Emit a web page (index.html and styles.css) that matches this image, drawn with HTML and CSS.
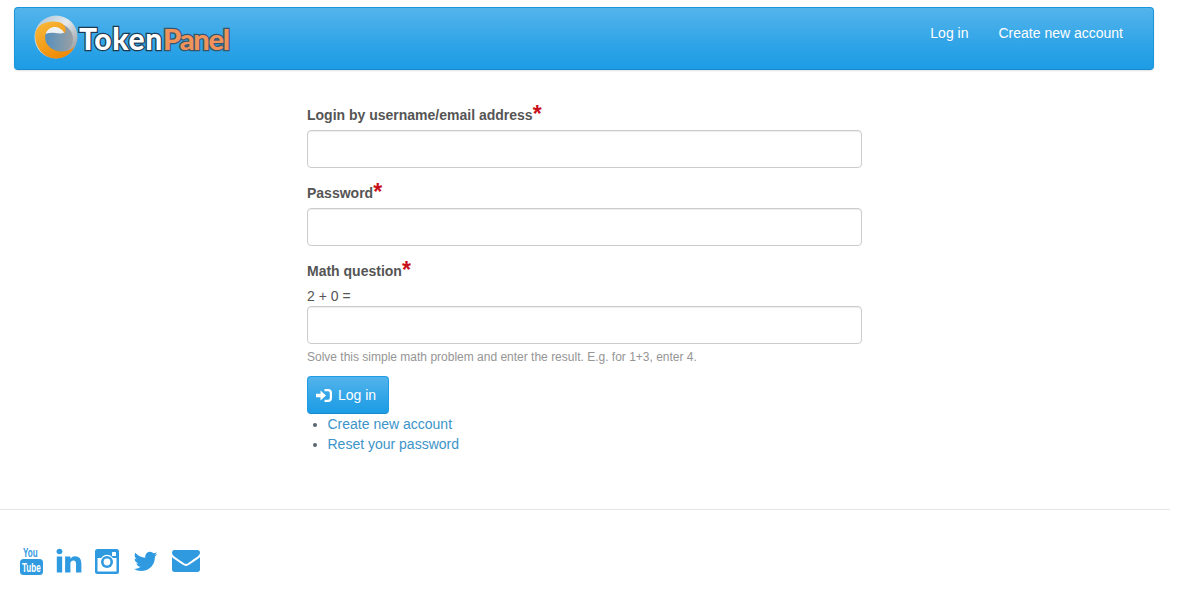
FILE: index.html
```html
<!DOCTYPE html>
<html lang="en">
<head>
<meta charset="utf-8">
<title>TokenPanel</title>
<link rel="stylesheet" href="styles.css">
</head>
<body>
<div class="page">
  <nav class="navbar">
    <a class="brand" href="#">
      <svg class="brand-mark" viewBox="0 0 44 44" width="44" height="44" aria-hidden="true">
        <defs>
          <linearGradient id="ringTop" x1="0" y1="0" x2="1" y2="1">
            <stop offset="0" stop-color="#9fbfd6"/>
            <stop offset=".45" stop-color="#e6eaed"/>
            <stop offset="1" stop-color="#80878c"/>
          </linearGradient>
          <linearGradient id="ringOrange" x1="0" y1="0" x2=".6" y2="1">
            <stop offset="0" stop-color="#f9bb3c"/>
            <stop offset="1" stop-color="#ef8a06"/>
          </linearGradient>
          <linearGradient id="core" x1="0" y1="0" x2="1" y2="0">
            <stop offset="0" stop-color="#4f8fbf"/>
            <stop offset="1" stop-color="#9a9fa3"/>
          </linearGradient>
        </defs>
        <circle cx="22" cy="22" r="21.500" fill="url(#ringTop)"/>
        <circle cx="24" cy="24" r="15" fill="url(#core)"/>
        <path d="M11 19c2-6 7-8.500 11-8 4 .5 7 3 8.500 6.500-3 1.500-6 1-9 .5-4-.5-7 0-10.500 1z" fill="#eef2f4"/>
        <path d="M1.500 17C-.5 30 8 43.500 22 43.500c8 0 15-4.500 18.500-12-5 5-13 6.500-20 3.500-7-3-10.500-9-9-15.500 1.500-5.500 6-8 10.500-7.500 4 .5 7 3 8.500 6.500 2.500-3.500 1-10-6-11.500C15 5 4.500 8 1.500 17z" fill="url(#ringOrange)"/>
      </svg>
      <span class="brand-text">Token<span class="brand-accent">Panel</span></span>
    </a>
    <ul class="nav-links">
      <li><a href="#">Log in</a></li>
      <li><a href="#">Create new account</a></li>
    </ul>
  </nav>

  <main class="login">
    <form>
      <div class="field">
        <label for="name">Login by username/email address<span class="req">*</span></label>
        <input id="name" class="input" type="text">
      </div>
      <div class="field">
        <label for="pass">Password<span class="req">*</span></label>
        <input id="pass" class="input" type="password">
      </div>
      <div class="field-math">
        <label for="math">Math question<span class="req">*</span></label>
        <div class="question">2 + 0 =</div>
        <input id="math" class="input" type="text">
        <p class="help">Solve this simple math problem and enter the result. E.g. for 1+3, enter 4.</p>
      </div>
      <button class="btn" type="button">
        <svg class="btn-icon" viewBox="0 0 16 13" width="16" height="13" aria-hidden="true">
          <path d="M0 4.700h4.500V1.500L10 6.500l-5.500 5V8.300H0z" fill="#fff"/>
          <path d="M8.500 0h3.500Q16 0 16 4v5q0 4-4 4H8.500v-2.200H12q1.800 0 1.800-1.800V4q0-1.800-1.800-1.800H8.500z" fill="#fff"/>
        </svg>Log in
      </button>
      <ul class="links">
        <li><a href="#">Create new account</a></li>
        <li><a href="#">Reset your password</a></li>
      </ul>
    </form>
  </main>

  <footer class="footer">
    <a class="social social-yt" href="#" aria-label="YouTube">
      <svg viewBox="0 0 24 28" width="24" height="28" aria-hidden="true">
        <text class="yt-you" transform="translate(4 10) scale(.62 1)">You</text>
        <rect x="1" y="12" width="23" height="16" rx="3.500" fill="#2f9ae0"/>
        <text class="yt-tube" transform="translate(3 25) scale(.62 1)">Tube</text>
      </svg>
    </a>
    <a class="social social-in" href="#" aria-label="LinkedIn">
      <svg viewBox="100 220 1600 1420" width="26" height="23" aria-hidden="true">
        <path d="M477 625v991h-330v-991h330zm21-306q1 73-50.500 122t-135.500 49h-2q-82 0-132-49t-50-122q0-74 51.500-122.500t134.500-48.500 133 48.500 51 122.500zm1166 729v568h-329v-530q0-105-40.500-164.500t-126.500-59.500q-63 0-105.500 34.500t-63.500 85.500q-11 30-11 81v553h-329q2-399 2-647t-1-296l-1-48h329v144h-2q20-32 41-56t56.500-52 87-43.500 114.500-15.500q171 0 275 113.500t104 332.500z" fill="#2f9ae0"/>
      </svg>
    </a>
    <a class="social social-ig" href="#" aria-label="Instagram">
      <svg viewBox="0 0 24 25" width="24" height="25" aria-hidden="true">
        <rect width="24" height="25" rx="2.500" fill="#2f9ae0"/>
        <rect x="2.500" y="9" width="19" height="13.500" fill="#fff"/>
        <circle cx="12" cy="13" r="7.200" fill="#fff"/>
        <circle cx="12" cy="13" r="6" fill="#2f9ae0"/>
        <circle cx="12" cy="13" r="3.400" fill="#fff"/>
        <rect x="17" y="3" width="4" height="4" rx=".6" fill="#fff"/>
      </svg>
    </a>
    <a class="social social-tw" href="#" aria-label="Twitter">
      <svg viewBox="0 200 1664 1400" width="25" height="21" aria-hidden="true">
        <path d="M1620 408q-67 98-162 167 1 14 1 42 0 130-38 259.500t-115.500 248.500-184.500 210.500-258 146-323 54.500q-271 0-496-145 35 4 78 4 225 0 401-138-105-2-188-64.500t-114-159.500q33 5 61 5 43 0 85-11-112-23-185.500-111.500t-73.500-205.500v-4q68 38 146 41-66-44-105-115t-39-154q0-88 44-163 121 149 294.500 238.500t371.500 99.500q-8-38-8-74 0-134 94.500-228.500t228.500-94.500q140 0 236 102 109-21 205-78-37 115-142 178 104-12 208-57z" fill="#2f9ae0"/>
      </svg>
    </a>
    <a class="social social-mail" href="#" aria-label="Email">
      <svg viewBox="0 256 1792 1408" width="28" height="22" aria-hidden="true">
        <path d="M1792 710v794q0 66-47 113t-113 47h-1472q-66 0-113-47t-47-113v-794q44 49 101 87 362 246 497 345 57 42 92.500 65.500t94.500 48 110 24.500h2q51 0 110-24.500t94.500-48 92.500-65.500q170-123 498-345 57-39 100-87zm0-294q0 79-49 151t-122 123q-376 261-468 325-10 7-42.500 30.500t-54 38-52 32.500-57.500 27-50 9h-2q-23 0-50-9t-57.500-27-52-32.500-54-38-42.500-30.500q-91-64-262-182.500t-205-142.500q-62-42-117-115.500t-55-136.500q0-78 41.500-130t118.500-52h1472q65 0 112.500 47t47.500 113z" fill="#2f9ae0"/>
      </svg>
    </a>
  </footer>
</div>
</body>
</html>
```

FILE: styles.css
```css
* { box-sizing: border-box; }

html, body { margin: 0; padding: 0; background: #fff; }

body {
  font-family: "Liberation Sans", Arial, sans-serif;
  font-size: 14px;
  line-height: 20px;
  color: #555;
}

.page { width: 1170px; }

a { text-decoration: none; }

.navbar {
  display: flex;
  justify-content: space-between;
  align-items: stretch;
  width: 1140px;
  height: 63px;
  margin: 7px 0 0 14px;
  padding: 0 15px 0 19px;
  background-image: linear-gradient(#54b4eb, #2fa4e7 60%, #1d9ce5);
  border: 1px solid #1995dc;
  border-bottom-color: #178acc;
  border-radius: 4px;
  box-shadow: 0 1px 2px rgba(0, 0, 0, .12);
}

.brand {
  display: flex;
  align-items: center;
  gap: 1px;
}

.brand-mark { display: block; margin-bottom: 4px; }

.brand-text {
  font-family: Lato, "Open Sans", sans-serif;
  font-size: 30px;
  line-height: 40px;
  font-weight: 900;
  letter-spacing: .7px;
  color: #fff;
  -webkit-text-stroke: 2.5px #1d3a52;
  paint-order: stroke fill;
}

.brand-accent {
  color: #f0935a;
  font-size: 29px;
  letter-spacing: -1.200px;
  -webkit-text-stroke-color: #35566f;
}

.nav-links {
  display: flex;
  margin: 0;
  padding: 0;
  list-style: none;
}

.nav-links a {
  display: block;
  padding: 15px;
  line-height: 20px;
  color: #fff;
  text-shadow: 0 1px 0 rgba(0, 0, 0, .05);
}

.login {
  width: 555px;
  margin: 35px 0 0 307px;
}

.field { margin-bottom: 15px; }

label {
  display: block;
  height: 20px;
  margin-bottom: 5px;
  font-weight: 700;
  color: #555;
}

.req {
  color: #c9101a;
  font-size: 23px;
  line-height: 14px;
  vertical-align: -2px;
}

.question { height: 20px; }

.input {
  display: block;
  width: 100%;
  height: 38px;
  padding: 8px 12px;
  background: #fff;
  border: 1px solid #ccc;
  border-radius: 4px;
  box-shadow: inset 0 1px 1px rgba(0, 0, 0, .075);
  font: inherit;
}

.help {
  margin: 5px 0 10px;
  font-size: 12px;
  line-height: 17px;
  color: #959595;
}

.btn {
  display: flex;
  align-items: center;
  gap: 6px;
  width: 82px;
  height: 38px;
  padding: 0 8px;
  background-image: linear-gradient(#54b4eb, #2fa4e7 60%, #1d9ce5);
  border: 1px solid #1f9ce5;
  border-bottom-color: #178acc;
  border-radius: 4px;
  color: #fff;
  font: inherit;
}

.links {
  margin: 0;
  padding: 0 0 0 20.500px;
  color: #5a6670;
}

.links a { color: #3c94c9; }

.footer {
  display: flex;
  align-items: center;
  margin-top: 55px;
  padding: 37px 0 0 19px;
  border-top: 1px solid #e7e7e7;
}

.social { display: block; line-height: 0; }

.social svg { overflow: visible; }

.social-yt { margin-right: 13px; }
.social-in { margin-right: 13px; }
.social-ig { margin-right: 14px; }
.social-tw { margin-right: 14px; }

.yt-you,
.yt-tube {
  font-family: "Liberation Sans", Arial, sans-serif;
  font-weight: 700;
  font-size: 13px;
}

.yt-you { fill: #2f9ae0; }
.yt-tube { fill: #fff; }
```
